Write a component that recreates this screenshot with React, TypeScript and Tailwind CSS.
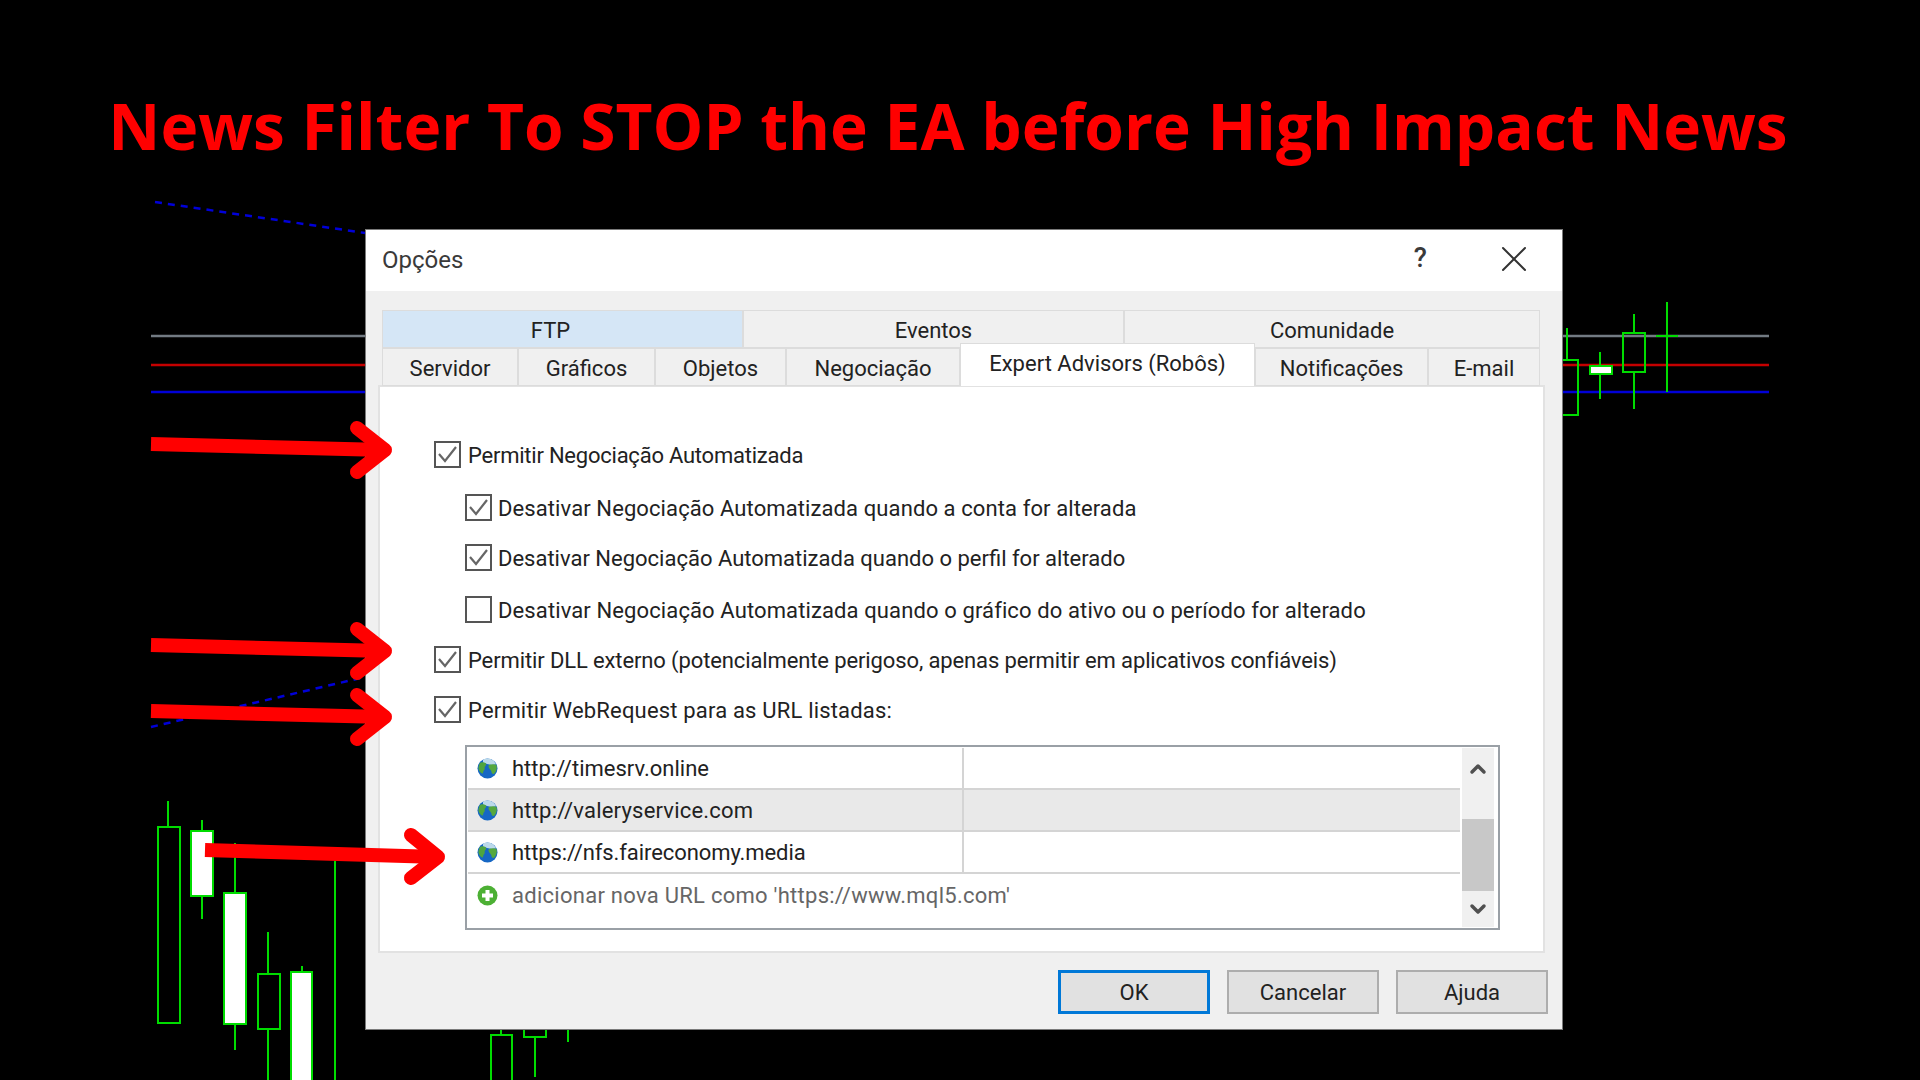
import React from 'react';
import { ChevronUp, ChevronDown, X } from 'lucide-react';

const OPTIONS = [
  { label: 'Permitir Negociação Automatizada', checked: true, indent: false, gap: 'mt-[54px]', tracking: 'tracking-[-0.23px]' },
  { label: 'Desativar Negociação Automatizada quando a conta for alterada', checked: true, indent: true, gap: 'mt-[26px]', tracking: 'tracking-[0.1px]' },
  { label: 'Desativar Negociação Automatizada quando o perfil for alterado', checked: true, indent: true, gap: 'mt-[23px]', tracking: '' },
  { label: 'Desativar Negociação Automatizada quando o gráfico do ativo ou o período for alterado', checked: false, indent: true, gap: 'mt-[25px]', tracking: 'tracking-[0.115px]' },
  { label: 'Permitir DLL externo (potencialmente perigoso, apenas permitir em aplicativos confiáveis)', checked: true, indent: false, gap: 'mt-[23px]', tracking: 'tracking-[-0.12px]' },
  { label: 'Permitir WebRequest para as URL listadas:', checked: true, indent: false, gap: 'mt-[23px]', tracking: 'tracking-[0.18px]' },
];

const URLS = [
  { url: 'http://timesrv.online', tracking: '' },
  { url: 'http://valeryservice.com', tracking: 'tracking-[0.2px]' },
  { url: 'https://nfs.faireconomy.media', tracking: 'tracking-[-0.08px]' },
];

const TOP_TABS = [
  { label: 'FTP', width: 'w-[361px]', bg: 'bg-[#d5e6f6] pr-[24px]' },
  { label: 'Eventos', width: 'w-[381px]', bg: 'bg-[#f0f0f0]' },
  { label: 'Comunidade', width: 'w-[416px]', bg: 'bg-[#f0f0f0]' },
];

const BOTTOM_TABS = [
  { label: 'Servidor', width: 'w-[136px]', active: false },
  { label: 'Gráficos', width: 'w-[137px]', active: false },
  { label: 'Objetos', width: 'w-[131px]', active: false },
  { label: 'Negociação', width: 'w-[174px]', active: false },
  { label: 'Expert Advisors (Robôs)', width: 'w-[295px]', active: true },
  { label: 'Notificações', width: 'w-[173px]', active: false },
  { label: 'E-mail', width: 'w-[112px]', active: false },
];

const GREEN = '#00dc00';

function ChartBackground() {
  return (
    <svg className="absolute inset-0 z-0" width="1920" height="1080" viewBox="0 0 1920 1080" fill="none">
      <path d="M151 336H1769" stroke="#727a82" strokeWidth="2.5" />
      <path d="M151 365H1769" stroke="#c40000" strokeWidth="2.5" />
      <path d="M151 392H1769" stroke="#0000d8" strokeWidth="2.5" />
      <path d="M155 202L365 233" stroke="#0000d8" strokeWidth="2.5" strokeDasharray="7 6" />
      <path d="M151 727L365 677" stroke="#0000d8" strokeWidth="2.5" strokeDasharray="7 6" />
      <g stroke={GREEN} strokeWidth="2">
        <path d="M168 801V827M202 820V831M202 896V919M235 843V893M235 1024V1050M268 932V974M268 1029V1080M302 966V972M335 861V1080" />
        <rect x="158" y="827" width="22" height="196" />
        <rect x="191" y="831" width="22" height="65" fill="#fff" />
        <rect x="224" y="893" width="22" height="131" fill="#fff" />
        <rect x="258" y="974" width="22" height="55" />
        <rect x="291" y="972" width="21" height="120" fill="#fff" />
        <path d="M501 1028V1035M491 1082V1035H512V1082M524 1028V1037H546V1028M535 1037V1077M568 1028V1042" />
        <path d="M1567 328V360M1556 360H1578V415H1556" />
        <rect x="1590" y="366" width="22" height="8" fill="#fff" />
        <path d="M1600 352V366M1600 374V399" />
        <rect x="1623" y="333" width="22" height="39" />
        <path d="M1634 314V333M1634 372V409M1667 302V392M1656 336H1678" />
      </g>
    </svg>
  );
}

function Arrows() {
  const arrows = [
    { shaft: 'M151 444L385 450', head: 'M357 428L385 450L357 472' },
    { shaft: 'M151 645L385 651', head: 'M357 629L385 651L357 673' },
    { shaft: 'M151 711L385 717', head: 'M357 695L385 717L357 739' },
    { shaft: 'M205 850L438 857', head: 'M411 835L438 857L411 878' },
  ];
  return (
    <svg className="absolute inset-0 z-20 pointer-events-none" width="1920" height="1080" viewBox="0 0 1920 1080" fill="none">
      {arrows.map((a, i) => (
        <g key={i} stroke="#ff0000">
          <path d={a.shaft} strokeWidth="14" />
          <path d={a.head} strokeWidth="14" strokeLinecap="round" strokeLinejoin="round" />
        </g>
      ))}
    </svg>
  );
}

function GlobeIcon() {
  return (
    <svg width="21" height="21" viewBox="0 0 21 21" className="shrink-0">
      <circle cx="10.5" cy="10.5" r="10" fill="#1667c4" />
      <path d="M6 1.5c3-1.300 7-1.200 9 .3 2 1 3 2.500 4 4.500l-4 .7-5-1-4-1.500z" fill="#bcd9ea" />
      <path d="M2.500 5.500C4 4 6.500 4 8.500 5c1.500 1 .5 2.500-.5 3.500s.5 2.500-.8 3.500-.7 3.500-1.700 3.500S1 13 1.500 9z" fill="#4fa53f" />
      <path d="M11.500 7.500c2.500-1.500 5.500-1.500 8-.5.800 3 0 6-2 8.500-1 1-3 .5-3-1.500s-3.500-3.500-3-6.500z" fill="#55a83e" />
    </svg>
  );
}

function PlusIcon() {
  return (
    <svg width="21" height="21" viewBox="0 0 21 21" className="shrink-0">
      <circle cx="10.5" cy="10.5" r="10" fill="#4cb034" />
      <path d="M10.5 5v11M5 10.5h11" stroke="#fff" strokeWidth="4" />
    </svg>
  );
}

function CheckBox({ checked }: { checked: boolean }) {
  return (
    <span className="w-[27px] h-[27px] border-2 border-[#555] bg-white flex items-center justify-center shrink-0">
      {checked && (
        <svg width="21" height="19" viewBox="0 0 21 19" fill="none">
          <path d="M2 9L8 16L19 2" stroke="#666" strokeWidth="2.2" />
        </svg>
      )}
    </span>
  );
}

function DialogButton({ label, primary }: { label: string; primary?: boolean }) {
  return (
    <button
      className={`w-[152px] h-[44px] bg-[#e1e1e1] text-[#222] flex items-center justify-center ${
        primary ? 'border-[3px] border-[#0078d7]' : 'border-2 border-[#adadad]'
      }`}
    >
      {label}
    </button>
  );
}

export default function App() {
  return (
    <div className="relative w-[1920px] h-[1080px] bg-black overflow-hidden">
      <ChartBackground />
      <Arrows />

      {/* Headline */}
      <div className="relative z-10 h-[229px] pt-[86px] pr-[24px] text-center font-['Open_Sans',sans-serif] font-bold text-[64px] leading-[80px] text-[#ff0000] whitespace-nowrap">
        News Filter To STOP the EA before High Impact News
      </div>

      {/* Dialog */}
      <div className="relative z-10 ml-[365px] w-[1198px] h-[801px] border border-[#7a7a7a] bg-[#f0f0f0] font-[Roboto,sans-serif] text-[22px] leading-[27px] text-[#222]">
        <div className="h-[61px] bg-white flex items-center pl-[16px] text-[#3a3a3a]">
          <span className="text-[24px]">Opções</span>
          <span className="ml-auto mr-[65px] font-medium text-[27px] -mt-[4px]">?</span>
          <X className="mr-[26px] w-[44px] h-[44px] -mt-[4px] text-[#333]" strokeWidth={1.1} />
        </div>

        {/* Tabs */}
        <div className="ml-[16px] w-[1158px] mt-[19px] flex h-[38px]">
          {TOP_TABS.map((tab) => (
            <div key={tab.label} className={`${tab.width} ${tab.bg} border border-[#dcdcdc] flex items-center justify-center pt-[3px]`}>
              {tab.label}
            </div>
          ))}
        </div>
        <div className="ml-[16px] w-[1158px] flex h-[38px] items-end">
          {BOTTOM_TABS.map((tab) =>
            tab.active ? (
              <div key={tab.label} className={`${tab.width} relative z-10 h-[43px] -mt-[5px] bg-white border border-b-0 border-[#dcdcdc] flex items-start pt-[6px] justify-center`}>
                {tab.label}
              </div>
            ) : (
              <div key={tab.label} className={`${tab.width} h-[38px] bg-[#f0f0f0] border border-[#dcdcdc] flex items-center justify-center pt-[3px]`}>
                {tab.label}
              </div>
            ),
          )}
        </div>

        {/* Panel */}
        <div className="ml-[12px] w-[1167px] h-[568px] bg-white border-2 border-[#e2e2e2] -mt-px pl-[54px]">
          {OPTIONS.map((opt) => (
            <div key={opt.label} className={`h-[27px] flex items-center ${opt.gap} ${opt.indent ? 'pl-[31px]' : ''}`}>
              <CheckBox checked={opt.checked} />
              <span className={`whitespace-nowrap pt-px ${opt.tracking} ${opt.indent ? 'ml-[6px]' : 'ml-[7px]'}`}>{opt.label}</span>
            </div>
          ))}

          {/* URL list */}
          <div className="ml-[31px] mt-[22px] w-[1035px] h-[185px] border-2 border-[#9aa0a6] flex p-px">
            <div className="flex-1 flex flex-col">
              {URLS.map((row, i) => (
                <div key={row.url} className={`h-[42px] flex border-b-2 border-[#d4d4d4] ${i === 1 ? 'bg-[#e9e9e9]' : ''}`}>
                  <div className="w-[496px] flex items-center gap-[14px] pl-[9px] border-r-2 border-[#d4d4d4]">
                    <GlobeIcon />
                    <span className={`pt-px ${row.tracking}`}>{row.url}</span>
                  </div>
                </div>
              ))}
              <div className="h-[42px] flex items-center gap-[14px] pl-[9px] text-[#666]">
                <PlusIcon />
                <span className="tracking-[0.27px]">adicionar nova URL como 'https://www.mql5.com'</span>
              </div>
            </div>
            <div className="w-[32px] ml-[2px] mr-[3px] bg-[#f0f0f0] flex flex-col">
              <div className="h-[71px] pt-[9px] flex justify-center items-start">
                <ChevronUp className="w-[24px] h-[24px] text-[#505050]" strokeWidth={3.5} />
              </div>
              <div className="h-[72px] bg-[#c8c8c8]" />
              <div className="flex-1 flex justify-center items-center">
                <ChevronDown className="w-[24px] h-[24px] text-[#505050]" strokeWidth={3.5} />
              </div>
            </div>
          </div>
        </div>

        {/* Footer buttons */}
        <div className="mt-[17px] pr-[14px] flex justify-end gap-[17px]">
          <DialogButton label="OK" primary />
          <DialogButton label="Cancelar" />
          <DialogButton label="Ajuda" />
        </div>
      </div>
    </div>
  );
}
